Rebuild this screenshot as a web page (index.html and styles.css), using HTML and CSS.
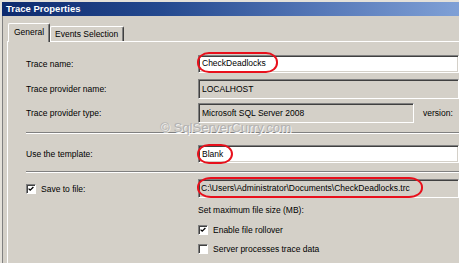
FILE: index.html
```html
<!DOCTYPE html>
<html>
<head>
<meta charset="utf-8">
<link rel="stylesheet" href="styles.css">
</head>
<body>
<div class="frame">
  <div class="titlebar">Trace Properties</div>
  <div class="dialog">
    <div class="tabs">
      <div class="tab active">General</div>
      <div class="tab">Events Selection</div>
    </div>
    <div class="panel">
      <div class="row r1">
        <div class="label">Trace name:</div>
        <div class="field white h18"><span class="mark m1">CheckDeadlocks</span></div>
      </div>
      <div class="row r2">
        <div class="label">Trace provider name:</div>
        <div class="field h20"><span class="txt">LOCALHOST</span></div>
      </div>
      <div class="row r3">
        <div class="label">Trace provider type:</div>
        <div class="field h20 short"><span class="txt">Microsoft SQL Server 2008</span></div>
        <div class="version">version:</div>
      </div>
      <div class="sep s1"></div>
      <div class="row r4">
        <div class="label">Use the template:</div>
        <div class="field white h18"><span class="mark m2">Blank</span></div>
      </div>
      <div class="sep s2"></div>
      <div class="row r5">
        <div class="label chk"><span class="box checked"><svg viewBox="0 0 10 10" width="10" height="10"><path d="M2 4.5 L4 6.5 L8 2.5" fill="none" stroke="#000" stroke-width="1.6"/></svg></span>Save to file:</div>
        <div class="field h19"><span class="mark m3">C:\Users\Administrator\Documents\CheckDeadlocks.trc</span></div>
      </div>
      <div class="sub">
        <div class="subrow t1">Set maximum file size (MB):</div>
        <div class="subrow t2 chk"><span class="box checked"><svg viewBox="0 0 10 10" width="10" height="10"><path d="M2 4.5 L4 6.5 L8 2.5" fill="none" stroke="#000" stroke-width="1.6"/></svg></span>Enable file rollover</div>
        <div class="subrow t3 chk"><span class="box"></span>Server processes trace data</div>
      </div>
      <div class="watermark">© SqlServerCurry.com</div>
    </div>
  </div>
</div>
</body>
</html>
```
FILE: styles.css
```css
html, body {
  margin: 0;
  padding: 0;
}
body {
  width: 459px;
  height: 263px;
  overflow: hidden;
  background: #d4d0c8;
  font-family: "Liberation Sans", Arial, sans-serif;
  font-size: 8.5px;
  color: #000;
}
.frame {
  width: 459px;
  height: 263px;
  box-sizing: border-box;
  border-left: 2px solid #e4e1da;
  border-top: 2px solid #e4e1da;
  display: flex;
  flex-direction: column;
}
.titlebar {
  height: 14px;
  line-height: 14px;
  padding-left: 4px;
  color: #fff;
  font-weight: bold;
  font-size: 9.5px;
  background: linear-gradient(to right, #0d2a6e 0%, #24498f 35%, #5678b8 70%, #7fa0d6 100%);
}
.dialog {
  flex: 1;
  border-left: 1px solid #808080;
  padding-left: 4px;
  display: flex;
  flex-direction: column;
}
.tabs {
  height: 25px;
  display: flex;
  align-items: flex-end;
  padding-left: 1px;
  position: relative;
  z-index: 2;
}
.tab {
  box-sizing: border-box;
  height: 15px;
  line-height: 15px;
  padding: 0 5px 0 4px;
  white-space: nowrap;
  border-top: 1px solid #fff;
  border-left: 1px solid #fff;
  border-right: 1px solid #404040;
  box-shadow: inset -1px 0 #808080;
  border-radius: 2px 2px 0 0;
}
.tab.active {
  height: 19px;
  width: 42px;
  padding: 0 6px 0 5px;
  margin-bottom: -1px;
  background: #d4d0c8;
  line-height: 17px;
}
.panel {
  flex: 1;
  position: relative;
  border-top: 1px solid #fff;
  border-left: 1px solid #fff;
  padding-left: 18px;
  display: flex;
  flex-direction: column;
}
.row {
  display: flex;
  align-items: center;
}
.label {
  width: 172px;
  flex: none;
  display: flex;
  align-items: center;
}
.r1 { margin-top: 13px; }
.r2 { margin-top: 6px; }
.r3 { margin-top: 4px; }
.r4 { margin-top: 11px; }
.r5 { margin-top: 6px; }
.field {
  flex: 1;
  box-sizing: border-box;
  border-top: 1px solid #808080;
  border-left: 1px solid #808080;
  border-right: 1px solid #fff;
  border-bottom: 1px solid #fff;
  box-shadow: inset 1px 1px #404040, inset -1px -1px #d4d0c8;
  display: flex;
  align-items: center;
  padding-left: 2px;
  background: #d4d0c8;
  white-space: nowrap;
}
.field.white { background: #fff; }
.h18 { height: 18px; }
.h19 { height: 19px; }
.h20 { height: 20px; }
.field.short {
  flex: none;
  width: 216px;
}
.txt { padding-left: 1px; }
.version {
  margin-left: 9px;
}
.mark {
  box-sizing: border-box;
  border: 2px solid #e8101c;
  border-radius: 12px / 10px;
  display: flex;
  align-items: center;
  margin-left: -4px;
  padding-left: 3px;
}
.m1 {
  height: 21px;
  margin-top: -3px;
  padding-right: 10px;
}
.m2 {
  height: 20px;
  padding-right: 8px;
}
.m3 {
  height: 21px;
  margin-top: -2px;
  padding-right: 11px;
  padding-left: 2px;
  border-radius: 14px / 10px;
}
.sep {
  height: 0;
  border-top: 1px solid #808080;
  border-bottom: 1px solid #fff;
  margin-right: -2px;
}
.s1 { margin-top: 9px; }
.s2 { margin-top: 8px; }
.sub {
  margin-left: 172px;
  display: flex;
  flex-direction: column;
}
.subrow {
  height: 12px;
  display: flex;
  align-items: center;
}
.t1 { margin-top: 6px; }
.t2 { margin-top: 8px; }
.t3 { margin-top: 7px; }
.box {
  box-sizing: border-box;
  width: 10px;
  height: 10px;
  background: #fff;
  border-top: 1px solid #808080;
  border-left: 1px solid #808080;
  border-right: 1px solid #fff;
  border-bottom: 1px solid #fff;
  box-shadow: inset 1px 1px #404040;
  margin-right: 5px;
  display: inline-flex;
  align-items: center;
  justify-content: center;
  flex: none;
}
.box svg {
  width: 8px;
  height: 8px;
}
.watermark {
  position: absolute;
  left: 152px;
  top: 78px;
  font-size: 13.2px;
  color: #b2b2b2;
  text-shadow: 1px 1px 0 #f4f4f4;
  pointer-events: none;
}
```
